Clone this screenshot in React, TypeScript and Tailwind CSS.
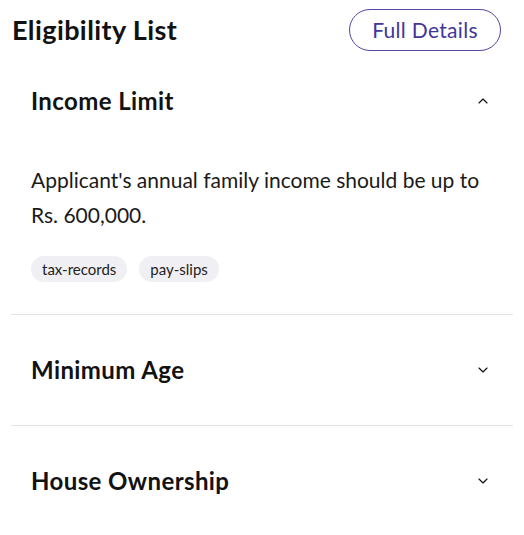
import { ChevronDown, ChevronUp } from "lucide-react";
import { useState } from "react";

type Criterion = {
  title: string;
  description: string;
  tags: string[];
};

const criteria: Criterion[] = [
  {
    title: "Income Limit",
    description: "Applicant's annual family income should be up to Rs. 600,000.",
    tags: ["tax-records", "pay-slips"],
  },
  {
    title: "Minimum Age",
    description: "Applicant should be at least 18 years old.",
    tags: ["cnic"],
  },
  {
    title: "House Ownership",
    description: "Applicant should not own a house.",
    tags: ["property-records"],
  },
];

export default function App() {
  const [openIndex, setOpenIndex] = useState<number | null>(0);

  return (
    <div className="min-h-[535px] bg-white px-[11px] font-['Lato','Noto_Sans',sans-serif] text-[#121212]">
      <div className="flex items-center justify-between pt-[9px] pl-[1px] pr-[12px]">
        <h1 className="text-[27px] font-bold leading-[42px] tracking-[0.4px]">Eligibility List</h1>
        <button className="h-[42px] w-[152px] rounded-full border-[1.5px] border-[#5446a6] text-[21px] tracking-[0.3px] text-[#43359b]">
          Full Details
        </button>
      </div>

      <div>
        {criteria.map((item, index) => {
          const isOpen = openIndex === index;

          return (
            <div
              key={item.title}
              className={index < criteria.length - 1 ? "border-b border-[#e4e4e4]" : ""}
            >
              <button
                onClick={() => setOpenIndex(isOpen ? null : index)}
                className={`flex w-full items-center justify-between pl-5 pr-[22px] text-left ${
                  index === 0 ? "h-[100px]" : "h-[110px]"
                }`}
              >
                <span className="text-[24px] font-bold tracking-[0.4px]">{item.title}</span>
                {isOpen ? (
                  <ChevronUp size={16} strokeWidth={1.75} />
                ) : (
                  <ChevronDown size={16} strokeWidth={1.75} />
                )}
              </button>

              {isOpen && (
                <div className="pl-5 pr-8 pt-[11px] pb-[32px]">
                  <p className="text-[21px] leading-[35px] text-[#1a1a1a]">{item.description}</p>
                  <div className="mt-[24px] flex gap-3">
                    {item.tags.map((tag) => (
                      <span
                        key={tag}
                        className="flex h-[26px] items-center rounded-full bg-[#f0f0f4] px-[11px] text-[15px] text-[#222]"
                      >
                        {tag}
                      </span>
                    ))}
                  </div>
                </div>
              )}
            </div>
          );
        })}
      </div>
    </div>
  );
}
